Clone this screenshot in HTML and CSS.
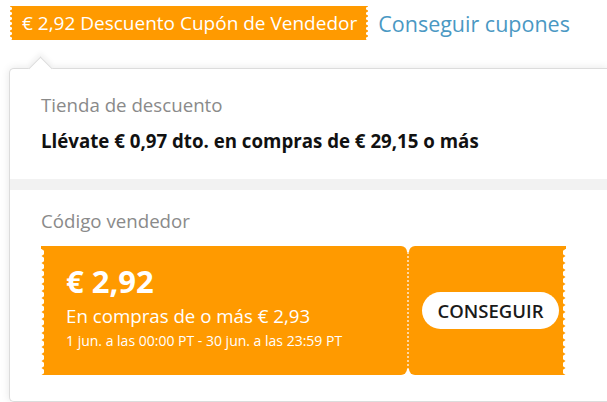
FILE: index.html
```html
<!DOCTYPE html>
<html lang="es">
<head>
    <meta charset="utf-8">
    <meta name="viewport" content="width=device-width, initial-scale=1">
    <title>Cupones</title>
    <link rel="stylesheet" href="styles.css">
</head>
<body>
<div class="page">
    <div class="head">
        <div class="tag">€ 2,92 Descuento Cupón de Vendedor</div>
        <a class="more" href="#">Conseguir cupones</a>
    </div>
    <div class="popover">
        <div class="section">
            <div class="label">Tienda de descuento</div>
            <div class="offer">Llévate € 0,97 dto. en compras de € 29,15 o más</div>
        </div>
        <div class="band"></div>
        <div class="section code">
            <div class="label">Código vendedor</div>
            <div class="coupon">
                <div class="coupon-main">
                    <div class="amount">€ 2,92</div>
                    <div class="cond">En compras de o más € 2,93</div>
                    <div class="dates">1 jun. a las 00:00 PT - 30 jun. a las 23:59 PT</div>
                </div>
                <div class="divider"></div>
                <div class="coupon-side">
                    <button class="get">CONSEGUIR</button>
                </div>
            </div>
        </div>
    </div>
</div>
</body>
</html>
```

FILE: styles.css
```css
html, body {
    margin: 0;
    padding: 0;
    background: white;
    overflow: hidden;
}

body {
    font-family: "Open Sans", "Liberation Sans", sans-serif;
    width: 607px;
    height: 402px;
}

.page {
    padding: 6px 0 0 10px;
}

.head {
    display: flex;
    align-items: center;
    gap: 10px;
}

.tag {
    position: relative;
    background: #ff9a00;
    color: white;
    font-size: 19px;
    height: 34px;
    line-height: 34px;
    padding: 0 11px 0 12px;
    white-space: nowrap;
}

.tag::before, .tag::after {
    content: "";
    position: absolute;
    top: 0;
    bottom: 0;
    width: 3px;
    background-size: 3px 5px;
    background-repeat: repeat-y;
}

.tag::before {
    left: 0;
    background-image: radial-gradient(circle at 0 50%, white 1.6px, transparent 2.2px);
}

.tag::after {
    right: 0;
    background-image: radial-gradient(circle at 100% 50%, white 1.6px, transparent 2.2px);
}

.more {
    color: #4a98c3;
    font-size: 21.5px;
    text-decoration: none;
    white-space: nowrap;
}

.popover {
    position: relative;
    margin-top: 28px;
    margin-left: -1px;
    width: 598px;
    height: 332px;
    border: 1px solid #dcdcdc;
    border-right: none;
    border-radius: 5px 0 0 5px;
    background: white;
    box-shadow: 0 0 8px rgba(0, 0, 0, .10);
}

.popover::before {
    content: "";
    position: absolute;
    top: -9px;
    left: 22px;
    width: 16px;
    height: 16px;
    background: white;
    border-top: 1px solid #dcdcdc;
    border-left: 1px solid #dcdcdc;
    transform: rotate(45deg);
    box-shadow: -3px -3px 5px rgba(0, 0, 0, .05);
}

.section {
    padding: 23px 0 0 31px;
    height: 87px;
}

.label {
    color: #8a8a8a;
    font-size: 18.7px;
    line-height: 26px;
}

.offer {
    margin-top: 10px;
    font-size: 18.7px;
    font-weight: bold;
    color: #111;
    line-height: 26px;
}

.band {
    height: 11px;
    background: #f2f2f2;
}

.section.code {
    padding-top: 18px;
}

.coupon {
    display: flex;
    margin-top: 12px;
    height: 129px;
    width: 525px;
}

.coupon-main, .coupon-side {
    position: relative;
    background: #ff9a00;
    color: white;
}

.coupon-main {
    width: 341px;
    padding: 15px 0 0 25px;
    border-radius: 0 6px 6px 0;
}

.coupon-side {
    flex: 1;
    display: flex;
    align-items: center;
    justify-content: center;
    border-radius: 6px 0 0 6px;
    padding-left: 6px;
}

.coupon-main::before, .coupon-side::after {
    content: "";
    position: absolute;
    top: 3px;
    bottom: 0;
    width: 4px;
    background-size: 4px 7px;
    background-repeat: repeat-y;
}

.coupon-main::before {
    left: 0;
    background-image: radial-gradient(circle at 0 50%, white 3px, transparent 3.5px);
}

.coupon-side::after {
    right: 0;
    background-image: radial-gradient(circle at 100% 50%, white 3px, transparent 3.5px);
}

.divider {
    width: 2px;
    margin: 6px 0;
    background: repeating-linear-gradient(#ffd6a0 0 2px, #ff9a00 2px 4px);
}

.amount {
    font-size: 31px;
    font-weight: bold;
    line-height: 40px;
}

.cond {
    font-size: 18.7px;
    line-height: 26px;
    margin-top: 2px;
}

.dates {
    font-size: 14px;
    line-height: 20px;
    margin-top: 2px;
}

.get {
    font-family: "Open Sans", "Liberation Sans", sans-serif;
    font-size: 18.5px;
    font-weight: 600;
    color: #1a1a1a;
    background: white;
    border: none;
    border-radius: 19px;
    height: 37px;
    padding: 0 16px;
}
```
